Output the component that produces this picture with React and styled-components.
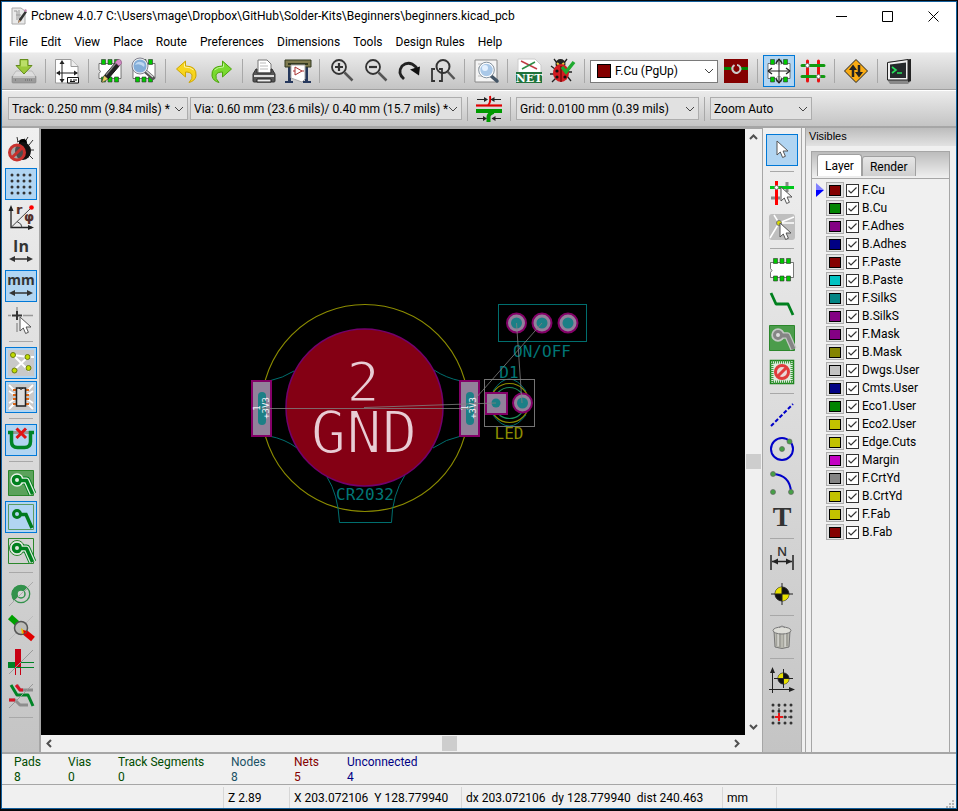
import React, { useState } from 'react'
import styled, { createGlobalStyle, css } from 'styled-components'

const layers = [
    ['F.Cu', '#840000'],
    ['B.Cu', '#008400'],
    ['F.Adhes', '#840084'],
    ['B.Adhes', '#000084'],
    ['F.Paste', '#840000'],
    ['B.Paste', '#00c2c2'],
    ['F.SilkS', '#008484'],
    ['B.SilkS', '#840084'],
    ['F.Mask', '#840084'],
    ['B.Mask', '#848400'],
    ['Dwgs.User', '#c2c2c2'],
    ['Cmts.User', '#000084'],
    ['Eco1.User', '#008400'],
    ['Eco2.User', '#c2c200'],
    ['Edge.Cuts', '#c2c200'],
    ['Margin', '#c200c2'],
    ['F.CrtYd', '#848484'],
    ['B.CrtYd', '#c2c200'],
    ['F.Fab', '#c2c200'],
    ['B.Fab', '#840000'],
]

const menus = ['File', 'Edit', 'View', 'Place', 'Route', 'Preferences', 'Dimensions', 'Tools', 'Design Rules', 'Help']

const boardInfo = [
    ['Pads', '8', '#004c00'],
    ['Vias', '0', '#004c00'],
    ['Track Segments', '0', '#004c00'],
    ['Nodes', '8', '#1a5064'],
    ['Nets', '5', '#840000'],
    ['Unconnected', '4', '#000084'],
]

const leftTools = [
    ['drcOff', 'Disable design rule checking'],
    ['grid', 'Hide grid', true],
    ['polar', 'Display polar coordinates'],
    ['inch', 'Units in inches'],
    ['mm', 'Units in millimeters', true],
    ['cursorShape', 'Change cursor shape'],
    null,
    ['ratsnest', 'Show board ratsnest', true],
    ['moduleRatsnest', 'Show footprint ratsnest', true],
    null,
    ['autoDelete', 'Enable automatic track deletion', true],
    null,
    ['zoneFilled', 'Show filled areas in zones'],
    ['zoneHidden', 'Do not show filled areas', true],
    ['zoneOutline', 'Show outlines of filled areas'],
    null,
    ['padSketch', 'Show pads in outline mode'],
    ['viaSketch', 'Show vias in outline mode'],
    ['trackSketch', 'Show tracks in outline mode'],
    ['contrast', 'High contrast display mode'],
    null,
]

const rightTools = [
    ['arrow', 'Select item', true],
    null,
    ['highlightNet', 'Highlight net'],
    ['localRatsnest', 'Display local ratsnest'],
    null,
    ['footprint', 'Add footprints'],
    ['track', 'Route tracks'],
    ['zone', 'Add filled zones'],
    ['keepout', 'Add keepout areas'],
    null,
    ['line', 'Add graphic line'],
    ['circle', 'Add graphic circle'],
    ['arc', 'Add graphic arc'],
    ['text', 'Add text'],
    null,
    ['dimension', 'Add dimension'],
    ['target', 'Add layer alignment target'],
    null,
    ['trash', 'Delete items'],
    null,
    ['origin', 'Place the origin for drill files'],
    ['gridOrigin', 'Set the origin point for the grid'],
]

const chipPins = (
    <g fill="#00c800" stroke="#333" strokeWidth=".6">
        <path d="M4.500 1.500h4v5h-4zM11 1.500h4v5h-4zM17.500 1.500h4v5h-4zM4.500 19h4v5h-4zM11 19h4v5h-4zM17.500 19h4v5h-4z" />
    </g>
)

const pointer = (x, y) => (
    <path
        transform={`translate(${x} ${y})`}
        d="M0 0v14l3.300-3 2.300 5.500 2.800-1.200-2.300-5.300H11z"
        fill="#fff"
        stroke="#555"
    />
)

const zoneTrack = (main, gap) => (
    <g fill="none" strokeLinejoin="round">
        <path d="M10 10.500h8.500l6 13.500" stroke={main} strokeWidth="8" />
        <circle cx="9" cy="10" r="6" fill={main} stroke="none" />
        <path d="M10 10.500h8.500l6 13.500" stroke={gap} strokeWidth="6" />
        <circle cx="9" cy="10" r="6" stroke={gap} strokeWidth="1.500" />
        <path d="M10 10.500h8.500l6 13.500" stroke={main} strokeWidth="3.500" />
        <circle cx="9" cy="10" r="3.500" stroke={main} strokeWidth="3" fill={gap} />
    </g>
)

const alignTarget = (cx, cy, r) => (
    <g transform={`translate(${cx} ${cy})`}>
        <circle r={r} fill="#111" stroke="#222" />
        <path d={`M0 0V${-r}A${r} ${r} 0 0 0 ${-r} 0zM0 0V${r}A${r} ${r} 0 0 0 ${r} 0z`} fill="#e8e000" />
        <path d={`M0 ${-r - 4}V${r + 4}M${-r - 4} 0H${r + 4}`} stroke="#222" />
    </g>
)

const dots = (step, from, count, r) =>
    Array.from({ length: count * count }, (_, i) => (
        <circle key={i} cx={from + (i % count) * step} cy={from + Math.floor(i / count) * step} r={r} fill="#333" />
    ))

const arrowBar = (y) => <path d={`M1 ${y}l6-3v2.300h12v-2.300l6 3-6 3v-2.300H7v2.300z`} fill="#333" />

const glyphs = {
    save: (
        <g>
            <path d="M5 13h16l4 6H1z" fill="#ddd" stroke="#aaa" strokeWidth=".6" />
            <path d="M1 18.500h24V24q0 1-1 1H2q-1 0-1-1z" fill="#9b9b9b" stroke="#888" strokeWidth=".6" />
            <path d="M2 19h22" stroke="#f1f1f1" />
            <path d="M14 22h8M4 22h2" stroke="#777" strokeWidth="1.500" strokeDasharray="1 1" />
            <path d="M9 1.500h8v6h4l-8 8.500-8-8.500h4z" fill="#9bc93b" stroke="#648c1c" />
            <path d="M10 2.500h6v6H10z" fill="#bbdf68" />
        </g>
    ),
    page: (
        <g>
            <path d="M1.500 1.500H17l7 7V25H1.500z" fill="#fff" stroke="#999" />
            <path d="M17 1.500v7h7" fill="#eee" stroke="#999" />
            <path d="M8 4v19M3 15h20" stroke="#222" />
            <path d="M8 2l2.500 4h-5zM8 25l2.500-4h-5zM2 15l4-2.500v5zM24 15l-4-2.500v5z" fill="#222" />
            <path d="M13.500 19.500h11V25h-11z" fill="#fff" stroke="#111" />
            <path d="M16 22h2m1 0h4m-7 1.500h5" stroke="#111" />
        </g>
    ),
    editModule: (
        <g>
            <path d="M2 5.500h22v15H2v-5q3-2 0-4z" fill="#fff" stroke="#444" strokeWidth=".7" />
            {chipPins}
            <path d="M5 24l2-6L19 4l4 3L11 21z" fill="#222" stroke="#111" />
            <path d="M9 17L19 5" stroke="#888" strokeWidth="1.200" />
            <path d="M5 24.500l2-7 4 3.500z" fill="#eccd62" stroke="#775" strokeWidth=".5" />
            <path d="M18 4.500q3-5 6-2 2 3-2 5.500z" fill="#d58bc6" stroke="#845279" strokeWidth=".7" />
        </g>
    ),
    findModule: (
        <g>
            <path d="M2 5.500h22v15H2z" fill="#fff" stroke="#444" strokeWidth=".7" />
            {chipPins}
            <path d="M14 13l8 7" stroke="#555" strokeWidth="4" strokeLinecap="round" />
            <path d="M15 13l7 6" stroke="#ddd" strokeWidth="1.500" />
            <circle cx="9" cy="8" r="7.300" fill="#83add8" stroke="#eee" strokeWidth="1.500" />
            <circle cx="9" cy="8" r="8" fill="none" stroke="#667" strokeWidth=".8" />
            <path d="M4 7q2-4 6-3 5 1 3 5-4-4-9-2z" fill="#bfd8f1" />
        </g>
    ),
    undo: (
        <g>
            <path d="M11.500 3v5Q23 8 22 18q-1 5-7 6.500 4-4 3-7.500-1-3-6.500-3v5L2.500 11z" fill="#f7d51d" stroke="#cda502" strokeLinejoin="round" />
            <path d="M10.500 5.500v3.500q6 0 9 3" stroke="#fff3a2" fill="none" />
        </g>
    ),
    redo: (
        <g>
            <path d="M14.500 3v5Q3 8 4 18q1 5 7 6.500-4-4-3-7.500 1-3 6.500-3v5l9-8z" fill="#79d92f" stroke="#4ca50c" strokeLinejoin="round" />
            <path d="M15.500 5.500v3.500q-6 0-9 3" stroke="#c2f59b" fill="none" />
        </g>
    ),
    print: (
        <g>
            <path d="M7 2h9l4 4v9H7z" fill="#fff" stroke="#777" />
            <path d="M9 5h6M9 8h8M9 11h8" stroke="#bbb" />
            <path d="M5 11h1v4h14v-4h1l3 5v7q0 1-1 1H3q-1 0-1-1v-7z" fill="#555" stroke="#333" />
            <path d="M3 17h20v2H3z" fill="#ddd" />
            <path d="M6 21h14v3H6z" fill="#eee" stroke="#222" />
        </g>
    ),
    plot: (
        <g>
            <path d="M3 7h3v16h2v2H0v-2h3zM20 7h3v16h3v2h-8v-2h2z" fill="#26385c" />
            <path d="M0 2h26v7H0z" fill="#7f7b50" stroke="#333a22" />
            <path d="M3 5h20v2H3z" fill="#333a22" />
            <path d="M6 7h14v14l-3 3-11-4z" fill="#fff" stroke="#aaa" />
            <path d="M10 9l7 4-7 4zM8 13h2m7 0h2" fill="none" stroke="#a33" />
        </g>
    ),
    zoomIn: (
        <g fill="none" stroke="#333">
            <circle cx="11" cy="9" r="7" fill="#ddd" strokeWidth="1.800" />
            <path d="M16.500 14.500l8 8" stroke="#555" strokeWidth="2.500" />
            <path d="M11 5v8M7 9h8" strokeWidth="2.200" />
        </g>
    ),
    zoomOut: (
        <g fill="none" stroke="#333">
            <circle cx="11" cy="9" r="7" fill="#ddd" strokeWidth="1.800" />
            <path d="M16.500 14.500l8 8" stroke="#555" strokeWidth="2.500" />
            <path d="M7 9h8" strokeWidth="2.200" />
        </g>
    ),
    redraw: (
        <g>
            <path d="M8 21Q1 15 6 8q7-6 14 1v4" fill="none" stroke="#222" strokeWidth="2.800" />
            <path d="M14 11.500l10-3-1 9z" fill="#111" />
        </g>
    ),
    zoomFit: (
        <g fill="none" stroke="#333">
            <circle cx="13" cy="8.500" r="6.500" strokeWidth="2" fill="#ddd" />
            <path d="M17.500 13.500l7 7.500" stroke="#555" strokeWidth="2.500" />
            <path d="M5 11H2v12h3M9 11h3v12H9" strokeWidth="1.800" />
        </g>
    ),
    findText: (
        <g>
            <path d="M2 2h22v22H2z" fill="#f4f4f4" stroke="#888" />
            <path d="M5 6h4m1 0h8M5 10h3M5 18h5m1 0h6" stroke="#bbb" />
            <path d="M17 17l7 6" stroke="#456" strokeWidth="3.500" strokeLinecap="round" />
            <circle cx="13.500" cy="12" r="7" fill="#a9c8e8" stroke="#fff" strokeWidth="1.500" />
            <circle cx="13.500" cy="12" r="7.800" fill="none" stroke="#678" strokeWidth=".8" />
            <circle cx="12" cy="10" r="3" fill="#e4f1ff" />
        </g>
    ),
    netlist: (
        <g>
            <path d="M2 1h17l6 6v9H2z" fill="#fff" stroke="#ccc" />
            <path d="M5 3l16 8" stroke="#c03b43" strokeWidth="1.500" />
            <path d="M6 11l13-7" stroke="#2e8c45" strokeWidth="1.500" />
            <path d="M0 14h26v11H0z" fill="#20733b" />
            <text x="13" y="24" textAnchor="middle" fontFamily="DejaVu Serif, serif" fontWeight="700" fontSize="11" fill="#fff">NET</text>
        </g>
    ),
    drc: (
        <g>
            <path d="M7 5L4 1M14 5l3-4M5 11L1 8M4 16H0M6 20l-4 4M17 18l4 5M18 14h4" stroke="#222" fill="none" strokeWidth="1.300" />
            <circle cx="10.500" cy="6" r="5" fill="#222" />
            <path d="M7 5l2 2M14 5l-2 2" stroke="#e9c83e" strokeWidth="2" />
            <ellipse cx="11" cy="15" rx="8" ry="9" fill="#d21b20" />
            <path d="M11 8v16" stroke="#500" />
            <g fill="#111"><circle cx="7" cy="13" r="1.600" /><circle cx="7" cy="19" r="1.600" /><circle cx="15" cy="19" r="1.600" /></g>
            <path d="M12 9l4 5 8-10" fill="none" stroke="#1faa2f" strokeWidth="3.500" />
        </g>
    ),
    layerPair: (
        <g>
            <path d="M1 1h24v24H1z" fill="#840000" />
            <path d="M1 10.500h7M18 10.500h7" stroke="#008400" strokeWidth="3" />
            <path d="M11.500 7q-3 2-2 5 2 4 5.500 2.500 3.500-2 2-5.500-1-2-3-2" fill="none" stroke="#ccc" strokeWidth="2" />
        </g>
    ),
    modeModule: (
        <g>
            <path d="M2 5.500h22v15H2z" fill="#fff" stroke="#444" strokeWidth=".7" />
            {chipPins}
            <path d="M11 1h4v6h-4zM11 19h4v6h-4z" fill="#ddd" />
            <path d="M13 2v22M3 13h20" stroke="#222" />
            <path d="M13 1l-3 4m3-4l3 4M13 25l-3-4m3 4l3-4M2 13l4-3m-4 3l4 3M24 13l-4-3m4 3l-4 3" stroke="#222" strokeWidth="1.300" />
        </g>
    ),
    modeTrack: (
        <g strokeLinecap="round">
            <path d="M7.500 3v20M18.500 3v20" stroke="#e81010" strokeWidth="3" />
            <path d="M2 7.500h22M2 18.500h22" stroke="#109a10" strokeWidth="3" />
            <circle cx="7.500" cy="7.500" r="2" fill="#fff" stroke="#777" />
            <circle cx="18.500" cy="18.500" r="2" fill="#fff" stroke="#777" />
        </g>
    ),
    router: (
        <g>
            <path d="M13 1.500L24.500 13 13 24.500 1.500 13z" fill="#f9ab13" stroke="#222" strokeLinejoin="round" />
            <path d="M10 19v-8m6-4v8" stroke="#222" strokeWidth="2.500" />
            <path d="M10 6.500l4 5.500H6zM16 19.500l4-5.500h-8z" fill="#222" />
        </g>
    ),
    console: (
        <g>
            <path d="M2 4l23-3v22l-3 3H4l-2-3z" fill="#888" />
            <path d="M1.500 4.500L22 1.500V22H1.500z" fill="#eee" stroke="#222" />
            <path d="M22 1.500l3-.5v22l-3 1z" fill="#222" />
            <path d="M4 6.500l16-2V20H4z" fill="#25292b" />
            <path d="M6 9l4 3-4 3m5 0h5" fill="none" stroke="#25e05b" strokeWidth="1.600" />
        </g>
    ),
    trackWidth: (
        <g>
            <path d="M0 9.500h26" stroke="#e00000" strokeWidth="2.200" />
            <path d="M12 9q3-2 2-9" fill="none" stroke="#e00000" strokeWidth="2" />
            <path d="M0 15h26" stroke="#009a00" strokeWidth="4" />
            <path d="M12.500 26v-5q0-3 5-5" fill="none" stroke="#009a00" strokeWidth="4" />
            <path d="M1 3.500h10M25 3.500H15M1 22.500h9M25 22.500h-9" stroke="#222" />
            <path d="M12 3.500L8 1v5zM14.500 3.500l4-2.500v5zM11 22.500L7 20v5zM15.500 22.500l4-2.500v5z" fill="#222" />
        </g>
    ),
    drcOff: (
        <g>
            <path d="M10 5L9 0m8 5l3-5M21 8l4-5M22 13h4M21 18l4 4M9 5l8-3" fill="none" stroke="#333" />
            <circle cx="15" cy="6" r="4" />
            <ellipse cx="15" cy="14" rx="8" ry="9" fill="#111" />
            <circle cx="9" cy="15.500" r="7.500" fill="#777" fillOpacity=".6" stroke="#c8322e" strokeWidth="3" />
            <path d="M4 20.500l10.500-10" stroke="#c8322e" strokeWidth="3" />
        </g>
    ),
    grid: dots(6, 4, 4, 1.5),
    polar: (
        <g>
            <path d="M3 2v20.500h21" fill="none" stroke="#222" strokeWidth="1.300" />
            <path d="M3 0l2.500 6h-5zM26 22.500L20 20v5z" fill="#222" />
            <path d="M3 22.500L23 3" stroke="#444" />
            <path d="M9 16.500q5 2 5 6" fill="none" stroke="#444" />
            <circle cx="23.500" cy="2.500" r="2.300" fill="red" />
            <text x="8" y="9" fontFamily="DejaVu Sans, sans-serif" fontWeight="700" fontSize="13" fill="#54302c">r</text>
            <text x="16" y="16" fontFamily="DejaVu Sans, sans-serif" fontWeight="700" fontSize="13" fill="#54302c">φ</text>
        </g>
    ),
    inch: (
        <g>
            <text x="13" y="13" textAnchor="middle" fontFamily="Open Sans, sans-serif" fontWeight="700" fontSize="16" fill="#333">In</text>
            {arrowBar(20)}
        </g>
    ),
    mm: (
        <g>
            <text x="13" y="12" textAnchor="middle" fontFamily="Open Sans, sans-serif" fontWeight="700" fontSize="14" fill="#333">mm</text>
            {arrowBar(20)}
        </g>
    ),
    cursorShape: (
        <g>
            <path d="M9 0v4M9 16v9M0 8.500h3M15 8.500h10" stroke="#999" strokeWidth="1.500" />
            <path d="M9 4v9M4 8.500h10" stroke="#333" strokeWidth="2" />
            {pointer(12, 10)}
        </g>
    ),
    ratsnest: (
        <g>
            <path d="M0 0h26v26H0z" fill="#c9c9c9" />
            <path d="M5 5l16 16M20 7L6 20M5 5l15 2h6" stroke="#fff" strokeWidth="2" fill="none" />
            <g fill="#c2dc00" stroke="#6a7a10">
                <circle cx="5" cy="5" r="2.500" /><circle cx="19.500" cy="7" r="2.500" /><circle cx="6.500" cy="20.500" r="2.500" /><circle cx="20.500" cy="18" r="2.500" />
            </g>
        </g>
    ),
    moduleRatsnest: (
        <g>
            <path d="M0 0h26v26H0z" fill="#c9c9c9" />
            <path d="M7 7L1 1M7 11L1 7M7 15l-6 4M7 19l-6 6M19 7l6-6M19 11l6-4M19 15l6 4M19 19l6 6" stroke="#fff" strokeWidth="1.800" />
            <path d="M5 6h3M5 11h3M5 15h3M5 20h3M18 6h3M18 11h3M18 15h3M18 20h3" stroke="#dd6513" strokeWidth="2" />
            <path d="M8.500 4h9v18h-9z" fill="#ddd" stroke="#222" strokeWidth="1.500" />
            <path d="M11 4q2 3 4 0" fill="none" stroke="#222" />
        </g>
    ),
    autoDelete: (
        <g fill="none">
            <path d="M5 5.500h16" stroke="#999" strokeWidth="3" />
            <path d="M0 5.500h3.500v9q0 6 6 6h7q6 0 6-6v-9H26" stroke="#008426" strokeWidth="3.500" />
            <path d="M8.500 1.500l9.500 9.500M18 1.500L8.500 11" stroke="#e01515" strokeWidth="3" />
        </g>
    ),
    zoneFilled: (
        <g>
            <path d="M.5.5h25v25H.5z" fill="#5ba25b" stroke="#2b872b" />
            {zoneTrack('#00801e', '#e4efe4')}
        </g>
    ),
    zoneHidden: (
        <g>
            <path d="M.5.5h25v25H.5z" fill="none" stroke="#5a9a62" />
            <path d="M12 10.500h6L24 24" fill="none" stroke="#007a1e" strokeWidth="3.500" />
            <circle cx="9" cy="10" r="3.500" fill="none" stroke="#007a1e" strokeWidth="3" />
        </g>
    ),
    zoneOutline: (
        <g>
            <path d="M.5.5h25v25H.5z" fill="none" stroke="#2b872b" />
            <circle cx="9" cy="10" r="7.500" fill="none" stroke="#2b872b" />
            {zoneTrack('#00801e', '#e0e8e0')}
        </g>
    ),
    padSketch: (
        <g fill="none">
            <path d="M6 20A9.200 9.200 0 1 1 20 7z" fill="#32924b" />
            <circle cx="13" cy="13" r="8.700" stroke="#32924b" strokeWidth="1.300" />
            <circle cx="13" cy="13" r="4" stroke="#32924b" fill="#d5d5d5" strokeWidth="1.500" />
            <path d="M1 25L25 1" stroke="#aaa" />
        </g>
    ),
    viaSketch: (
        <g>
            <path d="M2 2l10 9" stroke="#00a000" strokeWidth="6" />
            <path d="M14 15l11 9" stroke="#e00000" strokeWidth="6" />
            <path d="M1 25L25 1" stroke="#bbb" />
            <circle cx="13" cy="13" r="6.500" fill="#bcbcb8" stroke="#555" strokeWidth="1.500" />
            <path d="M13 13l5 4-4 2z" fill="#e9ba00" />
            <path d="M15 15l4 1-3 3z" fill="#e00000" />
        </g>
    ),
    trackSketch: (
        <g>
            <path d="M0 13h10v6H0z" fill="#008426" />
            <path d="M7 0h6v19H7z" fill="#c80014" />
            <path d="M13 13.500h13M8 18.500h18" stroke="#008426" />
            <path d="M7.500 19v7M12.500 19v7" stroke="#c80014" />
            <path d="M1 25L25 1" stroke="#999" />
        </g>
    ),
    contrast: (
        <g fill="none" strokeWidth="3" strokeLinejoin="round">
            <path d="M1 17h6l5 5h8" stroke="#8d8d8d" />
            <path d="M9 2l3 5h13" stroke="#8d8d8d" />
            <path d="M8 2l4 5h3M1 17h6" stroke="#d81425" />
            <path d="M3 2l6 10h11l5 11" stroke="#008426" />
            <path d="M1 25L25 1" stroke="#999" strokeWidth="1" />
        </g>
    ),
    arrow: pointer(8, 4),
    highlightNet: (
        <g fill="none">
            <path d="M18 2v10M2 18h9" stroke="#888" strokeWidth="3" />
            <path d="M7.500 1v24" stroke="red" strokeWidth="3" />
            <path d="M1 7.500h24" stroke="#00c81c" strokeWidth="3" />
            <circle cx="7.500" cy="7.500" r="2" fill="#fff" stroke="#777" />
            {pointer(12, 7)}
        </g>
    ),
    localRatsnest: (
        <g>
            <rect width="26" height="26" rx="3" fill="#bfbfbf" />
            <path d="M10 9L5 1M10 9l15-6M10 9h15M10 9L1 24" stroke="#fff" strokeWidth="1.500" />
            <circle cx="10" cy="9" r="2.500" fill="#d8da00" stroke="#777" />
            {pointer(11, 9)}
        </g>
    ),
    footprint: (
        <g>
            <path d="M1.500 5.500h23v15h-23v-5q3-2 0-4z" fill="#fff" stroke="#444" strokeWidth=".7" />
            {chipPins}
        </g>
    ),
    track: <path d="M2 2l5 11h12l5 11" fill="none" stroke="#00801e" strokeWidth="2.800" strokeLinejoin="round" />,
    zone: (
        <g>
            <path d="M.5.5h25v25H.5z" fill="#4b9c4b" stroke="#2b872b" />
            <g fill="none" stroke="#c4c9c4" strokeWidth="6.500" strokeLinejoin="round">
                <path d="M10 10.500h8.500l6 13.500" />
                <circle cx="9" cy="10" r="3.500" />
            </g>
            <g fill="none" stroke="#858585" strokeWidth="4" strokeLinejoin="round">
                <path d="M10 10.500h8.500l6 13.500" />
                <circle cx="9" cy="10" r="3.500" fill="#ddd" strokeWidth="3" />
            </g>
        </g>
    ),
    keepout: (
        <g>
            <path d="M1.500 1.500h23v23h-23z" fill="#ddebdd" stroke="#1b831b" strokeWidth="1.500" />
            <path d="M3 3h20v20H3z" fill="none" stroke="#3f9a3f" strokeWidth="3" strokeDasharray="1 1" />
            <circle cx="13" cy="13" r="6.500" fill="#e9d8d8" stroke="#e03c3c" strokeWidth="3" />
            <path d="M8.500 17.500l9-9" stroke="#e03c3c" strokeWidth="3" />
        </g>
    ),
    line: <path d="M2 24L24 2" stroke="#0000c8" strokeWidth="2" strokeDasharray="4 2" />,
    circle: (
        <g fill="#46a046" stroke="#666" strokeWidth=".7">
            <circle cx="13" cy="13" r="11" fill="none" stroke="#0000c8" strokeWidth="2" />
            <circle cx="13" cy="13" r="2.500" />
            <circle cx="20.500" cy="5.500" r="2.500" />
        </g>
    ),
    arc: (
        <g fill="#46a046" stroke="#666" strokeWidth=".7">
            <path d="M4 4q17 1 18 18" fill="none" stroke="#0000c8" strokeWidth="2" />
            <circle cx="4" cy="4" r="2.500" /><circle cx="4" cy="22" r="2.500" /><circle cx="22" cy="22" r="2.500" />
        </g>
    ),
    text: <text x="13" y="22" textAnchor="middle" fontFamily="Liberation Serif, serif" fontWeight="700" fontSize="28" fill="#333">T</text>,
    dimension: (
        <g>
            <text x="13" y="9" textAnchor="middle" fontFamily="Open Sans, sans-serif" fontWeight="600" fontSize="13" fill="#333">N</text>
            <path d="M2 8v15M24 8v15M3 14.500h20" stroke="#222" strokeWidth="1.500" />
            <path d="M3 14.500l6-3v6zM23 14.500l-6-3v6z" fill="#222" />
        </g>
    ),
    target: alignTarget(13, 13, 7),
    trash: (
        <g>
            <path d="M5 7h16l-1 16q-7 3-14 0z" fill="#b9b9b0" stroke="#777" />
            <path d="M8 9v13M11 9v14M15 9v14M18 9v13" stroke="#8a8a84" />
            <path d="M9 9v13M16 9v14" stroke="#e8e8e4" />
            <ellipse cx="13" cy="6.500" rx="9" ry="3.500" fill="#deded8" stroke="#777" />
            <path d="M10 3.500q3-3 6 0" fill="#eee" stroke="#777" />
        </g>
    ),
    origin: (
        <g>
            <path d="M3.500 3v23M0 22.500h22" stroke="#222" />
            <path d="M3.500 0L6 6H1zM26 22.500L20 20v5z" fill="#222" />
            {alignTarget(14.5, 11.5, 5.5)}
        </g>
    ),
    gridOrigin: (
        <g>
            {dots(6, 4, 4, 1.5)}
            <path d="M10 4v8M16 16h6" stroke="#333" strokeDasharray="2 1" />
            <path d="M10 12v8M6 16h8" stroke="#e81818" strokeWidth="2" />
        </g>
    ),
}

const topTools = [
    [['save', 'Save board']],
    [['page', 'Page settings']],
    [['editModule', 'Open footprint editor'], ['findModule', 'Open footprint viewer']],
    [['undo', 'Undo'], ['redo', 'Redo']],
    [['print', 'Print board'], ['plot', 'Plot']],
    [['zoomIn', 'Zoom in'], ['zoomOut', 'Zoom out'], ['redraw', 'Redraw view'], ['zoomFit', 'Zoom auto']],
    [['findText', 'Find']],
    [['netlist', 'Read netlist'], ['drc', 'Perform design rules check']],
]

const Tool = ({ name, label, active }) => (
    <ToolButton type="button" aria-label={label} title={label} $active={active}>
        <Glyph width="26" height="26" viewBox="0 0 26 26">{glyphs[name]}</Glyph>
    </ToolButton>
)

const Choice = ({ label, value, width, swatch, light }) => (
    <ChoiceBox $width={width}>
        <ChoiceSelect aria-label={label} $light={light} $swatch={swatch}>
            <option>{value}</option>
        </ChoiceSelect>
        {swatch ? <ChoiceSwatch $color={swatch} /> : null}
        <Chevron width="10" height="6" viewBox="0 0 10 6">
            <path d="M1 1l4 4 4-4" fill="none" stroke="#444" />
        </Chevron>
    </ChoiceBox>
)

const SideTools = ({ tools }) =>
    tools.map((tool, index) =>
        tool ? <Tool key={index} name={tool[0]} label={tool[1]} active={tool[2]} /> : <SideSeparator key={index} />
    )

const ArrowGlyph = ({ d }) => (
    <svg width="9" height="9" viewBox="0 0 9 9">
        <path d={d} fill="none" stroke="#505050" strokeWidth="2" />
    </svg>
)

const Pad = ({ x, y }) => (
    <g>
        <circle cx={x} cy={y} r="9.500" fill="#92809a" stroke="#840068" strokeWidth="2" />
        <circle cx={x} cy={y} r="5.500" fill="#1c7f86" />
    </g>
)

const BatteryTab = ({ x }) => (
    <g>
        <rect x={x} y="381" width="19" height="55" fill="#92809a" stroke="#840068" strokeWidth="2" />
        <rect x={x + 6} y="392" width="8" height="33" rx="4" fill="#1c7f86" />
    </g>
)

const Board = () => (
    <BoardSvg viewBox="41 129 704 606" preserveAspectRatio="xMidYMid slice">
        <g fill="none" stroke="#8c8c00" strokeWidth="1.200">
            <circle cx="365" cy="408" r="103.500" />
            <circle cx="509.500" cy="403" r="19.500" />
        </g>
        <g fill="none" stroke="#006e6e">
            <path d="M269 381Q283 378 294 371M269 436Q285 439 297 448M461 381Q446 378 434 370M461 436Q446 439 433 448" />
            <path d="M327 477Q338 494 339.500 522.500H391.500Q392 495 405 475" />
            <rect x="498.500" y="304.500" width="88" height="37" />
            <path d="M493 391q16-24 33 0M493 415q16 22 33 0" />
        </g>
        <circle cx="509.500" cy="403" r="15.500" fill="none" stroke="#1b8a58" strokeWidth="1.200" />
        <circle cx="364.500" cy="407.500" r="78.500" fill="#840014" stroke="#72006c" strokeWidth="1.500" />
        <BatteryTab x={252} />
        <BatteryTab x={460} />
        <Pad x={516.5} y={323} />
        <Pad x={542} y={323} />
        <Pad x={568} y={323} />
        <rect x="486" y="393" width="21" height="21" fill="#92809a" stroke="#840068" strokeWidth="2" />
        <circle cx="496" cy="403" r="4.500" fill="#1c7f86" />
        <Pad x={522.5} y={403} />
        <rect x="484.500" y="379.500" width="50" height="47" fill="none" stroke="#747474" />
        <BoardText x="365" y="500" textAnchor="middle" fill="#007676">CR2032</BoardText>
        <BoardText x="542" y="357" textAnchor="middle" fill="#007676">ON/OFF</BoardText>
        <BoardText x="509" y="378" textAnchor="middle" fill="#007676">D1</BoardText>
        <BoardText x="509" y="439" textAnchor="middle" fill="#8c8c00">LED</BoardText>
        <PadName x="363" y="401" $size={56}>2</PadName>
        <PadName x="364" y="453" $size={59}>GND</PadName>
        <g fill="#f0f0f6" textAnchor="middle">
            <BoardText $size={9} transform="translate(260 408) rotate(-90)">1</BoardText>
            <BoardText $size={9} transform="translate(269 408) rotate(-90)">+3V3</BoardText>
            <BoardText $size={9} transform="translate(468 408) rotate(-90)">1</BoardText>
            <BoardText $size={9} transform="translate(476 408) rotate(-90)">+3V3</BoardText>
        </g>
        <path
            d="M262 408.500H470M364 407.500L496 403M542 323L476 398M516.500 323L522 403"
            fill="none"
            stroke="#808080"
            strokeOpacity=".8"
        />
    </BoardSvg>
)

export function App() {
    const [hidden, setHidden] = useState([])

    const toggleLayer = (name) => {
        setHidden(hidden.includes(name) ? hidden.filter((item) => item !== name) : [...hidden, name])
    }

    return (
        <Desktop>
            <GlobalStyle />
            <Window>
                <TitleBar>
                    <svg width="16" height="18" viewBox="0 0 16 18">
                        <path d="M1 1h9l4 3v13H1z" fill="#e9e9e9" stroke="#aaa" />
                        <path d="M3 4h3v9M8 3v9M5 8h5" stroke="#999" fill="none" />
                        <path d="M7 16l1-4 6-8 2 1-6 9z" fill="#333" />
                        <path d="M13 4l1-2 2 1-1 2z" fill="#c98bb8" />
                        <path d="M7 16l1-3 2 1z" fill="#d3a070" />
                    </svg>
                    <Title>Pcbnew 4.0.7 C:\Users\mage\Dropbox\GitHub\Solder-Kits\Beginners\beginners.kicad_pcb</Title>
                    <WindowButton type="button" aria-label="Minimize">
                        <svg width="11" height="11"><path d="M0 5.500h11" stroke="#000" /></svg>
                    </WindowButton>
                    <WindowButton type="button" aria-label="Maximize">
                        <svg width="11" height="11"><path d="M.5.5h10v10H.5z" fill="none" stroke="#000" /></svg>
                    </WindowButton>
                    <WindowButton type="button" aria-label="Close">
                        <svg width="11" height="11"><path d="M.5.5l10 10M10.500.5l-10 10" stroke="#000" /></svg>
                    </WindowButton>
                </TitleBar>

                <MenuBar>
                    {menus.map((item) => <MenuItem key={item} type="button">{item}</MenuItem>)}
                </MenuBar>

                <MainToolbar>
                    {topTools.map((group, index) => (
                        <React.Fragment key={index}>
                            {group.map(([name, label]) => <Tool key={name} name={name} label={label} />)}
                            <Separator />
                        </React.Fragment>
                    ))}
                    <Choice label="Active layer" value="F.Cu (PgUp)" width={128} swatch="#840000" light />
                    <Tool name="layerPair" label="Show active layer selections" />
                    <Separator />
                    <Tool name="modeModule" label="Footprint mode" active />
                    <Tool name="modeTrack" label="Track mode" />
                    <Separator />
                    <Tool name="router" label="Fast access to the web router" />
                    <Separator />
                    <Tool name="console" label="Show scripting console" />
                </MainToolbar>

                <OptionsToolbar>
                    <Choice label="Track width" value="Track: 0.250 mm (9.84 mils) *" width={180} />
                    <Choice label="Via size" value="Via: 0.60 mm (23.6 mils)/ 0.40 mm (15.7 mils) *" width={272} />
                    <Separator />
                    <Tool name="trackWidth" label="Use starting track width" />
                    <Separator />
                    <Choice label="Grid" value="Grid: 0.0100 mm (0.39 mils)" width={183} />
                    <Separator />
                    <Choice label="Zoom" value="Zoom Auto" width={102} />
                </OptionsToolbar>

                <Workspace>
                    <LeftToolbar><SideTools tools={leftTools} /></LeftToolbar>
                    <CanvasArea>
                        <Board />
                        <VerticalScroll>
                            <ScrollButton type="button" aria-label="Scroll up"><ArrowGlyph d="M1 6l3.500-3.500L8 6" /></ScrollButton>
                            <Track $grow={307} />
                            <Thumb />
                            <Track $grow={248} />
                            <ScrollButton type="button" aria-label="Scroll down"><ArrowGlyph d="M1 3l3.500 3.500L8 3" /></ScrollButton>
                        </VerticalScroll>
                        <HorizontalScroll>
                            <ScrollButton type="button" aria-label="Scroll left"><ArrowGlyph d="M6 1L2.500 4.500 6 8" /></ScrollButton>
                            <Track $grow={383} />
                            <Thumb />
                            <Track $grow={270} />
                            <ScrollButton type="button" aria-label="Scroll right"><ArrowGlyph d="M3 1l3.500 3.500L3 8" /></ScrollButton>
                        </HorizontalScroll>
                    </CanvasArea>
                    <RightToolbar><SideTools tools={rightTools} /></RightToolbar>
                    <Panel>
                        <PanelTitle>Visibles</PanelTitle>
                        <Notebook>
                            <TabStrip role="tablist">
                                <Tab type="button" role="tab" aria-selected="true" $active>Layer</Tab>
                                <Tab type="button" role="tab" aria-selected="false">Render</Tab>
                            </TabStrip>
                            <LayerList>
                                {layers.map(([name, color], index) => (
                                    <LayerRow key={name}>
                                        <Marker width="8" height="14" viewBox="0 0 8 14">
                                            {index === 0 ? (
                                                <g>
                                                    <path d="M0 0l8 7H0z" fill="#8080ff" />
                                                    <path d="M0 7h8l-8 7z" fill="#0000ff" />
                                                </g>
                                            ) : null}
                                        </Marker>
                                        <ColorButton type="button" aria-label={`${name} color`}>
                                            <Swatch $color={color} />
                                        </ColorButton>
                                        <LayerLabel>
                                            <CheckCell>
                                                <CheckBox type="checkbox" checked={!hidden.includes(name)} onChange={() => toggleLayer(name)} />
                                                {hidden.includes(name) ? null : (
                                                    <CheckMark width="13" height="13" viewBox="0 0 13 13">
                                                        <path d="M2.500 6.500L5 9l5.500-5.500" fill="none" stroke="#333" strokeWidth="1.200" />
                                                    </CheckMark>
                                                )}
                                            </CheckCell>
                                            {name}
                                        </LayerLabel>
                                    </LayerRow>
                                ))}
                            </LayerList>
                        </Notebook>
                    </Panel>
                </Workspace>

                <MessagePanel>
                    {boardInfo.map(([name, value, color]) => (
                        <Info key={name} $color={color}>
                            <span>{name}</span>
                            <span>{value}</span>
                        </Info>
                    ))}
                </MessagePanel>

                <StatusBar>
                    <StatusField />
                    <StatusField>Z 2.89</StatusField>
                    <StatusField>X 203.072106  Y 128.779940</StatusField>
                    <StatusField>dx 203.072106  dy 128.779940  dist 240.463</StatusField>
                    <StatusField>mm</StatusField>
                    <GripField>
                        <svg width="9" height="9" viewBox="0 0 9 9">
                            <path d="M7 0h2v2H7zM7 3h2v2H7zM7 6h2v2H7zM4 3h2v2H4zM4 6h2v2H4zM1 6h2v2H1z" fill="#b5b5b5" />
                        </svg>
                    </GripField>
                </StatusBar>
            </Window>
        </Desktop>
    )
}

export default App

const GlobalStyle = createGlobalStyle`
    * {
        box-sizing: border-box;
    }

    body {
        margin: 0;
        font: 12px/16px Roboto, sans-serif;
        color: #000;
        background: #05080b;
    }

    button, select, input {
        font: inherit;
        color: inherit;
        margin: 0;
        padding: 0;
    }
`

const Desktop = styled.div`
    height: 100vh;
    padding: 1px 1px 2px;
    background: #05080b;
`

const Window = styled.div`
    display: flex;
    flex-direction: column;
    height: 100%;
    border: 1px solid #135f9c;
    background: #f0f0f0;
    overflow: hidden;
`

const TitleBar = styled.header`
    display: flex;
    align-items: center;
    height: 28px;
    padding-left: 9px;
    background: #fff;
    flex: none;
`

const Title = styled.h1`
    flex: 1;
    margin: 0 0 0 4px;
    font-size: 12px;
    font-weight: 400;
    white-space: nowrap;
    overflow: hidden;
`

const WindowButton = styled.button`
    display: flex;
    align-items: center;
    justify-content: center;
    width: 46px;
    height: 28px;
    border: 0;
    background: none;
`

const MenuBar = styled.nav`
    display: flex;
    gap: 1px;
    height: 22px;
    padding: 2px 1px 0;
    background: #fff;
    flex: none;
`

const MenuItem = styled.button`
    padding: 0 6px;
    border: 0;
    background: none;
`

const Toolbar = styled.div`
    display: flex;
    align-items: center;
    gap: 2px;
    flex: none;
    padding: 0 6px;
`

const MainToolbar = styled(Toolbar)`
    height: 38px;
    border-top: 1px solid #f4f4f4;
    border-bottom: 1px solid #a0a0a0;
    background: linear-gradient(#ebebeb, #c4c4c4);
`

const OptionsToolbar = styled(Toolbar)`
    height: 38px;
    border-top: 1px solid #fff;
    border-bottom: 2px solid #a6a6a6;
    background: linear-gradient(#ebebeb, #c4c4c4);
`

const Separator = styled.span`
    width: 1px;
    height: 24px;
    margin: 0 3px;
    background: #a8a8a8;
`

const SideSeparator = styled.span`
    width: 24px;
    height: 1px;
    margin: 3px 0;
    background: #a8a8a8;
    flex: none;
`

const ToolButton = styled.button`
    display: flex;
    align-items: center;
    justify-content: center;
    width: 32px;
    height: 32px;
    flex: none;
    border: 1px solid transparent;
    background: none;

    ${({ $active }) => $active && css`
        border-color: #0078d7;
        background: #b1d5f2;
    `}
`

const Glyph = styled.svg`
    display: block;
    overflow: visible;
`

const ChoiceBox = styled.div`
    display: grid;
    align-items: center;
    width: ${({ $width }) => $width}px;

    > * {
        grid-area: 1 / 1;
    }
`

const ChoiceSelect = styled.select`
    appearance: none;
    width: 100%;
    height: 23px;
    padding-left: ${({ $swatch }) => ($swatch ? 24 : 3)}px;
    border: 1px solid ${({ $light }) => ($light ? '#7a7a7a' : '#adadad')};
    border-radius: 0;
    background: ${({ $light }) => ($light ? '#fff' : '#e1e1e1')};
`

const ChoiceSwatch = styled.span`
    width: 14px;
    height: 14px;
    margin-left: 7px;
    border: 1px solid #000;
    background: ${({ $color }) => $color};
    pointer-events: none;
`

const Chevron = styled.svg`
    justify-self: end;
    margin-right: 4px;
    pointer-events: none;
`

const Workspace = styled.main`
    display: flex;
    flex: 1;
    min-height: 0;
`

const SideToolbar = styled.div`
    display: flex;
    flex-direction: column;
    align-items: center;
    gap: 2px;
    flex: none;
    padding: 6px 3px 0;
    background: linear-gradient(#f0f0f0, #c4c4c4);
    overflow: hidden;
`

const LeftToolbar = styled(SideToolbar)`
    padding-right: 2px;
    border-right: 2px solid #a6a6a6;
`

const RightToolbar = styled(SideToolbar)`
    border-left: 1px solid #a6a6a6;
    border-right: 1px solid #a6a6a6;
`

const CanvasArea = styled.section`
    display: grid;
    grid-template: 1fr 17px / 1fr 17px;
    flex: 1;
    min-width: 0;
    border-top: 1px solid #a6a6a6;
`

const BoardSvg = styled.svg`
    display: block;
    width: 100%;
    height: 100%;
    min-height: 0;
    background: #000;
`

const BoardText = styled.text`
    font-family: "DejaVu Sans Mono", monospace;
    font-size: ${({ $size }) => $size || 16}px;
`

// stroked in the copper colour so the pen looks thinner
const PadName = styled(BoardText)`
    text-anchor: middle;
    fill: #e8ccd4;
    stroke: #840014;
    stroke-width: 2px;
`

const VerticalScroll = styled.div`
    display: flex;
    flex-direction: column;
`

const HorizontalScroll = styled.div`
    display: flex;
`

const ScrollButton = styled.button`
    display: flex;
    align-items: center;
    justify-content: center;
    width: 17px;
    height: 17px;
    border: 0;
    background: none;
    flex: none;
`

const Track = styled.span`
    flex: ${({ $grow }) => $grow} 1 0;
`

const Thumb = styled.span`
    width: 17px;
    height: 17px;
    border: 1px solid #f0f0f0;
    background: #cdcdcd;
    flex: none;
`

const Panel = styled.aside`
    display: flex;
    flex-direction: column;
    width: 151px;
    flex: none;
    margin-left: 3px;
    border-left: 1px solid #a6a6a6;
`

const PanelTitle = styled.h2`
    height: 18px;
    margin: 0 0 5px;
    padding: 0 3px;
    font: 11px/17px "Liberation Sans", sans-serif;
    background: linear-gradient(#bcbcbc, #e2e2e2);
`

const Notebook = styled.div`
    display: flex;
    flex-direction: column;
    flex: 1;
    min-height: 0;
    margin: 0 6px 0 5px;
    border: 1px solid #a6a6a6;
    border-bottom: 0;
`

const TabStrip = styled.div`
    display: flex;
    align-items: flex-end;
    height: 27px;
    padding: 0 5px 2px;
    border-bottom: 1px solid #a6a6a6;
    background: linear-gradient(#bcbcbc, #f0f0f0);
`

const Tab = styled.button`
    height: ${({ $active }) => ($active ? 22 : 20)}px;
    padding: 0 7px;
    border: 1px solid #a0a0a0;
    border-bottom: 0;
    border-radius: 3px 3px 0 0;
    background: ${({ $active }) => ($active ? '#fff' : 'linear-gradient(#e6e6e6, #cfcfcf)')};
`

const LayerList = styled.ul`
    flex: 1;
    min-height: 0;
    margin: 0;
    padding: 2px 0 0 4px;
    list-style: none;
    overflow: hidden;
`

const LayerRow = styled.li`
    display: flex;
    align-items: center;
    height: 18px;
`

const Marker = styled.svg`
    margin-right: 2px;
`

const ColorButton = styled.button`
    display: flex;
    align-items: center;
    justify-content: center;
    width: 18px;
    height: 16px;
    border: 1px solid #adadad;
    background: #e1e1e1;
`

const Swatch = styled.span`
    width: 12px;
    height: 11px;
    border: 1px solid #000;
    background: ${({ $color }) => $color};
`

const LayerLabel = styled.label`
    display: flex;
    align-items: center;
    gap: 3px;
    margin-left: 2px;
`

const CheckCell = styled.span`
    display: grid;

    > * {
        grid-area: 1 / 1;
    }
`

const CheckBox = styled.input`
    appearance: none;
    width: 13px;
    height: 13px;
    border: 1px solid #333;
    background: #fff;
`

const CheckMark = styled.svg`
    pointer-events: none;
`

const MessagePanel = styled.section`
    display: grid;
    grid-template-columns: 54px 50px 113px 63px 53px 1fr;
    height: 33px;
    flex: none;
    padding: 1px 12px 0;
    border-top: 2px solid #a6a6a6;
    border-bottom: 1px solid #a6a6a6;
`

const Info = styled.div`
    display: flex;
    flex-direction: column;
    line-height: 15px;
    color: ${({ $color }) => $color};
`

const StatusBar = styled.footer`
    display: grid;
    grid-template-columns: 222px 66px 172px 261px 54px 1fr;
    height: 23px;
    flex: none;
    padding: 2px 0 1px;
`

const StatusField = styled.span`
    padding-left: 4px;
    border-right: 1px solid #d7d7d7;
    line-height: 22px;
    white-space: pre;
`

const GripField = styled.span`
    display: flex;
    align-items: flex-end;
    justify-content: flex-end;
    padding-right: 2px;
`
